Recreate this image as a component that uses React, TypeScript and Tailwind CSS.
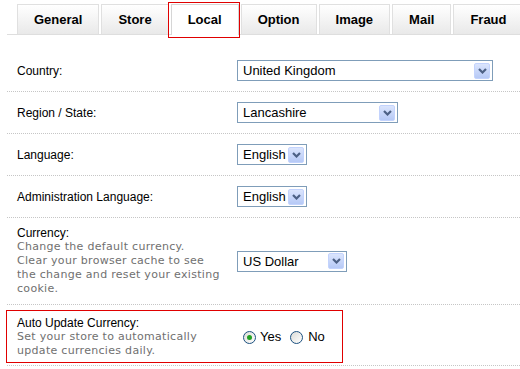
import React from "react"

const tabs = ["General", "Store", "Local", "Option", "Image", "Mail", "Fraud"]

function Select({ value, width }: { value: string; width: string }) {
    return (
        <div className={`flex h-[21px] items-center justify-between border border-[#7f9db9] bg-white pl-[5px] pr-[2px] ${width}`}>
            <span className="text-[13px] leading-none text-black">{value}</span>
            <span className="flex h-[16px] w-[16px] items-center justify-center rounded-[2px] border border-[#c3d3fd] bg-gradient-to-b from-[#dbe5fd] to-[#b6c9f6]">
                <svg width="9" height="6" viewBox="0 0 9 6">
                    <path d="M1 1 L4.5 4.5 L8 1" fill="none" stroke="#4d6185" strokeWidth="2.2" />
                </svg>
            </span>
        </div>
    )
}

function Radio({ checked }: { checked?: boolean }) {
    return (
        <span className="flex h-[13px] w-[13px] items-center justify-center rounded-full border border-[#1c5180] bg-gradient-to-br from-[#dcdcd7] to-white">
            {checked && <span className="h-[5px] w-[5px] rounded-full bg-[#21a121]" />}
        </span>
    )
}

function Row({ label, children }: { label: string; children: React.ReactNode }) {
    return (
        <div className="flex h-[42px] items-center border-b border-dotted border-[#c6c6c6] pl-[10px]">
            <div className="w-[220px] text-[12px] text-black">{label}</div>
            {children}
        </div>
    )
}

const hint = "font-['DejaVu_Sans',Verdana,sans-serif] text-[11px] leading-[14px] tracking-[0.3px] text-[#707070]"

export default function App() {
    return (
        <div className="h-[369px] w-[520px] overflow-hidden bg-white font-['Liberation_Sans',Arial,sans-serif]">
            {/* tab strip */}
            <div className="relative ml-[7px] mt-[4px] flex items-end gap-[2px] border-b border-[#dedede] pl-[10px]">
                {tabs.map((t) =>
                    t === "Local" ? (
                        <div
                            key={t}
                            className="relative z-10 -mb-px flex h-[31px] items-center border border-b-0 border-[#d6d6d6] bg-white px-[16px] text-[13px] font-bold text-black"
                        >
                            {t}
                            <span className="pointer-events-none absolute -left-[4px] -right-[2px] -top-[3px] -bottom-[3px] border border-[#e00000]" />
                        </div>
                    ) : (
                        <div
                            key={t}
                            className="flex h-[30px] items-center border border-b-0 border-[#e0e0e0] bg-gradient-to-b from-[#ffffff] to-[#e9e9e9] px-[16px] text-[13px] font-bold text-black"
                        >
                            {t}
                        </div>
                    )
                )}
            </div>

            {/* form */}
            <div className="ml-[7px] mt-[15px]">
                <Row label="Country:">
                    <Select value="United Kingdom" width="w-[256px]" />
                </Row>
                <Row label="Region / State:">
                    <Select value="Lancashire" width="w-[161px]" />
                </Row>
                <Row label="Language:">
                    <Select value="English" width="w-[70px]" />
                </Row>
                <Row label="Administration Language:">
                    <Select value="English" width="w-[70px]" />
                </Row>

                <div className="flex h-[87px] items-center border-b border-dotted border-[#c6c6c6] pl-[10px]">
                    <div className="w-[220px]">
                        <div className="text-[12px] leading-[14px] text-black">Currency:</div>
                        <div className={hint}>
                            Change the default currency.
                            <br />
                            Clear your browser cache to see
                            <br />
                            the change and reset your existing
                            <br />
                            cookie.
                        </div>
                    </div>
                    <Select value="US Dollar" width="w-[110px]" />
                </div>

                <div className="relative flex h-[61px] items-center border-b border-dotted border-[#c6c6c6] pl-[10px] pt-[4px]">
                    <div className="w-[220px]">
                        <div className="text-[12px] leading-[14px] text-black">Auto Update Currency:</div>
                        <div className={hint}>
                            Set your store to automatically
                            <br />
                            update currencies daily.
                        </div>
                    </div>
                    <div className="ml-[6px] flex items-center text-[13px] text-black">
                        <Radio checked />
                        <span className="ml-[4px] mr-[9px]">Yes</span>
                        <Radio />
                        <span className="ml-[5px]">No</span>
                    </div>
                    <span className="pointer-events-none absolute -left-px top-[5px] h-[53px] w-[337px] border border-[#e00000]" />
                </div>
            </div>
        </div>
    )
}
